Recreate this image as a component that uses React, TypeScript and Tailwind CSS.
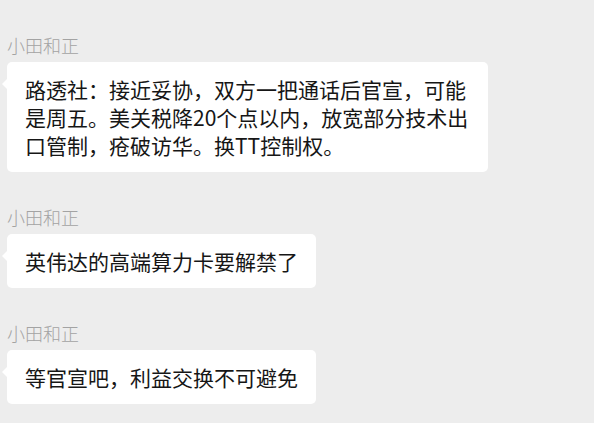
import React from "react";

const messages = [
  {
    name: "小田和正",
    width: "w-[481px]",
    lines: [
      "路透社：接近妥协，双方一把通话后官宣，可能",
      "是周五。美关税降20个点以内，放宽部分技术出",
      "口管制，疮破访华。换TT控制权。",
    ],
  },
  { name: "小田和正", width: "", lines: ["英伟达的高端算力卡要解禁了"] },
  { name: "小田和正", width: "", lines: ["等官宣吧，利益交换不可避免"] },
];

export default function App() {
  return (
    <div
      className="w-[594px] h-[423px] overflow-hidden bg-[#ededed] pl-[7px] pt-[35px]"
      style={{ fontFamily: '"Noto Sans CJK SC", "Noto Sans", sans-serif' }}
    >
      <div className="flex flex-col gap-[35px]">
        {messages.map((m, i) => (
          <div key={i} className="flex flex-col items-start">
            {/* Sender */}
            <div className="text-[18px] leading-[20px] text-[#a3a3a3] font-light">{m.name}</div>

            {/* Bubble */}
            <div className={`relative mt-[7px] ${m.width} rounded-[5px] bg-white px-[18px] py-[13px]`}>
              <span className="absolute -left-[5px] top-[16px] h-0 w-0 border-y-[6px] border-r-[6px] border-y-transparent border-r-white" />
              <div className="text-[21px] leading-[28px] text-[#161616] whitespace-nowrap">
                {m.lines.map((l, j) => (
                  <div key={j}>{l}</div>
                ))}
              </div>
            </div>
          </div>
        ))}
      </div>
    </div>
  );
}
